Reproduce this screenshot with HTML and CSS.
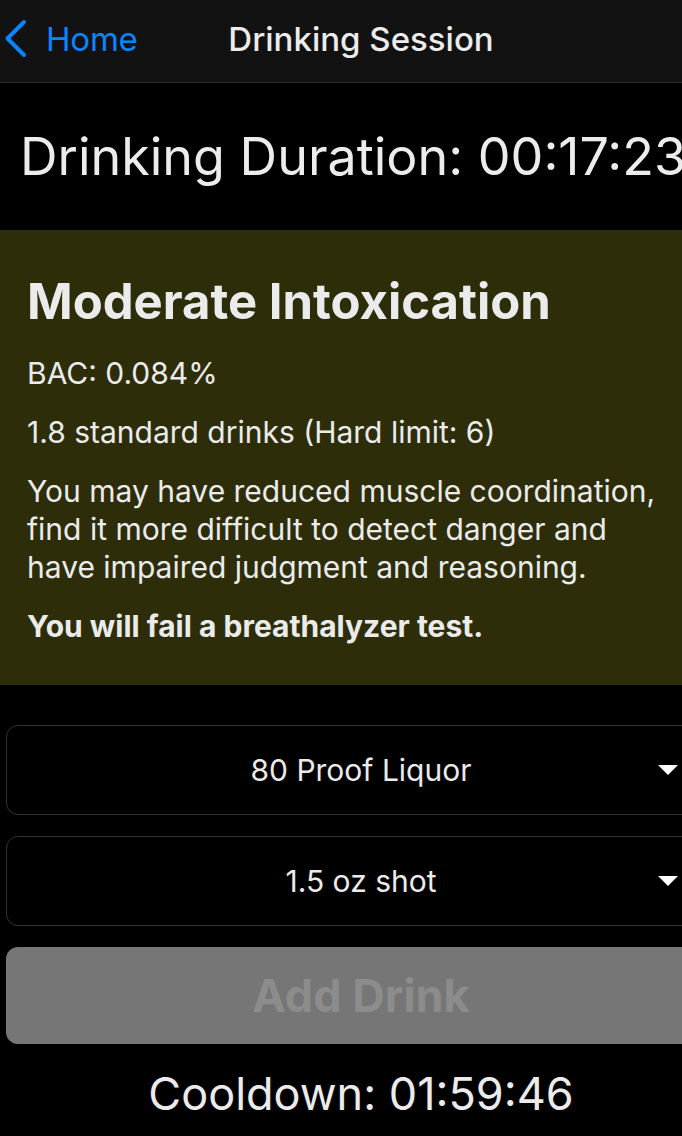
FILE: index.html
```html
<!DOCTYPE html>
<html>
<head>
<meta charset="utf-8">
<link rel="stylesheet" href="styles.css">
</head>
<body>
<div class="page">
  <header class="nav">
    <a class="back">
      <svg class="chev" width="24" height="40" viewBox="0 0 24 40"><path d="M21 3 L4.5 19.5 L21 36" fill="none" stroke="#0a84ff" stroke-width="4" stroke-linecap="round" stroke-linejoin="round"/></svg>
      <span>Home</span>
    </a>
    <div class="title">Drinking Session</div>
  </header>
  <div class="duration">Drinking Duration: 00:17:23</div>
  <section class="status">
    <h1>Moderate Intoxication</h1>
    <p>BAC: 0.084%</p>
    <p>1.8 standard drinks (Hard limit: 6)</p>
    <p class="desc">You may have reduced muscle coordination, find it more difficult to detect danger and have impaired judgment and reasoning.</p>
    <p class="warn">You will fail a breathalyzer test.</p>
  </section>
  <div class="controls">
    <div class="select"><span>80 Proof Liquor</span><i class="arrow"></i></div>
    <div class="select"><span>1.5 oz shot</span><i class="arrow"></i></div>
    <div class="btn">Add Drink</div>
    <div class="cooldown">Cooldown: 01:59:46</div>
  </div>
</div>
</body>
</html>
```
FILE: styles.css
```css
html, body {
  margin: 0;
  padding: 0;
  background: #000;
  overflow: hidden;
}
body {
  width: 682px;
  height: 1136px;
  font-family: Inter, Roboto, "Liberation Sans", sans-serif;
  color: #ebebeb;
}
.page {
  width: 722px;
}
.nav {
  height: 82px;
  background: #121212;
  border-bottom: 1px solid #2a2a2a;
  display: flex;
  align-items: center;
  justify-content: center;
  position: relative;
}
.back {
  position: absolute;
  left: 3px;
  top: 0;
  height: 82px;
  display: flex;
  align-items: center;
  gap: 19px;
  color: #0a84ff;
  font-size: 33px;
  line-height: 40px;
  letter-spacing: -0.2px;
}
.back span { margin-bottom: 4px; }
.chev { margin-bottom: 4px; }
.title {
  font-size: 33px;
  line-height: 40px;
  font-weight: 500;
  color: #ececec;
  margin-bottom: 4px;
}
.duration {
  height: 147px;
  display: flex;
  align-items: center;
  padding-left: 20px;
  font-size: 52px;
  white-space: nowrap;
  color: #ececec;
}
.status {
  background: #2d2e09;
  padding: 40px 0 40px 27px;
}
.status h1 {
  margin: 0 0 20px;
  font-size: 49px;
  font-weight: 700;
  line-height: 64px;
  color: #ebebeb;
}
.status p {
  margin: 0 0 21px;
  font-size: 30px;
  line-height: 38px;
  width: 650px;
}
.status p.warn {
  font-weight: 700;
  margin-bottom: 0;
}
.controls {
  padding: 40px 6px 0 6px;
  display: flex;
  flex-direction: column;
  gap: 21px;
}
.select {
  height: 88px;
  border: 1px solid #333;
  border-radius: 12px;
  display: flex;
  align-items: center;
  justify-content: center;
  position: relative;
  font-size: 30px;
}
.arrow {
  position: absolute;
  right: 37px;
  top: 39px;
  width: 0;
  height: 0;
  border-left: 10px solid transparent;
  border-right: 10px solid transparent;
  border-top: 10px solid #fff;
}
.btn {
  height: 97px;
  border-radius: 12px;
  background: #767676;
  color: #8c8c8c;
  font-weight: 700;
  font-size: 45px;
  display: flex;
  align-items: center;
  justify-content: center;
}
.cooldown {
  text-align: center;
  font-size: 45px;
  line-height: 54px;
  margin-top: 2px;
}
```
